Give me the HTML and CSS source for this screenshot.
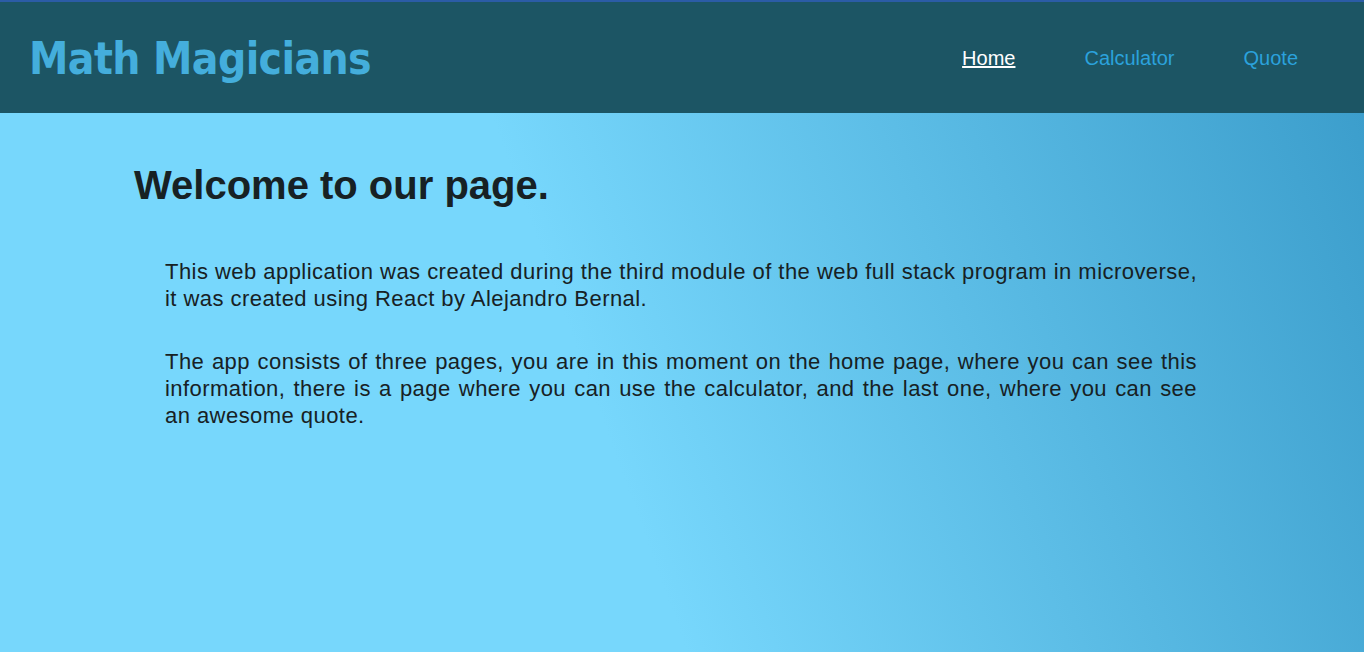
FILE: index.html
```html
<!DOCTYPE html>
<html lang="en">
<head>
<meta charset="utf-8">
<title>Math Magicians</title>
<link rel="stylesheet" href="styles.css">
</head>
<body>
<header class="topbar">
  <h1 class="brand">Math Magicians</h1>
  <nav class="nav">
    <a class="nav-link active" href="#">Home</a>
    <a class="nav-link" href="#">Calculator</a>
    <a class="nav-link" href="#">Quote</a>
  </nav>
</header>
<main class="home">
  <h2 class="home-title">Welcome to our page.</h2>
  <p class="home-text">This web application was created during the third module of the web full stack program in microverse, it was created using React by Alejandro Bernal.</p>
  <p class="home-text">The app consists of three pages, you are in this moment on the home page, where you can see this information, there is a page where you can use the calculator, and the last one, where you can see an awesome quote.</p>
</main>
</body>
</html>
```
FILE: styles.css
```css
html, body {
  margin: 0;
  padding: 0;
  height: 100%;
}
body {
  display: flex;
  flex-direction: column;
  font-family: "Liberation Sans", Arial, sans-serif;
  background: #77d7fc;
}
.topbar {
  flex: 0 0 auto;
  height: 111px;
  border-top: 2px solid #2b5ca6;
  background: #1c5564;
  display: flex;
  align-items: center;
  justify-content: space-between;
  padding: 0 66px 0 29px;
}
.brand {
  margin: 2px 0 0;
  font-family: "DejaVu Sans Condensed", "DejaVu Sans", sans-serif;
  font-weight: bold;
  font-size: 44px;
  color: #44aedc;
  letter-spacing: -0.6px;
}
.nav {
  display: flex;
  gap: 69px;
  margin-top: 2px;
}
.nav-link {
  font-size: 20px;
  color: #2ba2dc;
  text-decoration: none;
}
.nav-link.active {
  color: #ffffff;
  text-decoration: underline;
}
.home {
  flex: 1 1 auto;
  background: linear-gradient(70deg, #77d7fc 44%, #3c9ecc 100%);
  padding: 50px 167px 0 134px;
}
.home-title {
  margin: 0 0 50px;
  font-size: 40px;
  font-weight: bold;
  color: #172124;
}
.home-text {
  margin: 0 0 36px 31px;
  font-size: 22px;
  line-height: 27px;
  letter-spacing: 0.45px;
  color: #172124;
  text-align: justify;
}
```
